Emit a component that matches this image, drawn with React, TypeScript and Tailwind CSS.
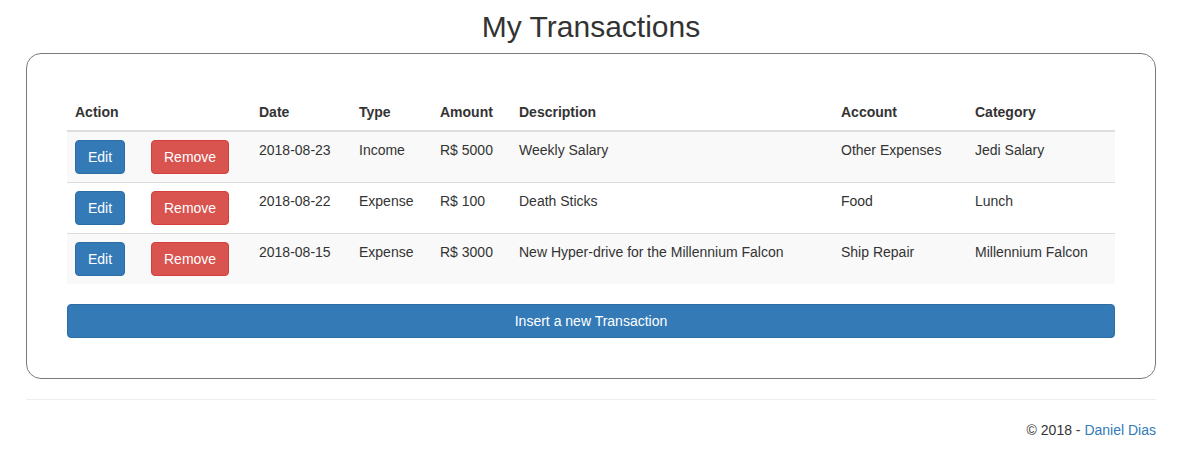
const rows = [
  { date: '2018-08-23', type: 'Income', amount: 'R$ 5000', description: 'Weekly Salary', account: 'Other Expenses', category: 'Jedi Salary' },
  { date: '2018-08-22', type: 'Expense', amount: 'R$ 100', description: 'Death Sticks', account: 'Food', category: 'Lunch' },
  { date: '2018-08-15', type: 'Expense', amount: 'R$ 3000', description: 'New Hyper-drive for the Millennium Falcon', account: 'Ship Repair', category: 'Millennium Falcon' },
]

export default function App() {
  return (
    <div className="min-h-screen bg-white text-[14px] leading-[20px] text-[#333] font-['Liberation_Sans',Arial,sans-serif]">
      <div className="ml-[26px] w-[1130px] pt-[10px]">
        <h2 className="text-center text-[30px] leading-[33px] mb-[10px] text-[#333]">My Transactions</h2>

        <div className="border border-[#7a7a7a] rounded-[15px] px-[40px] pt-[40px] pb-[40px]">
          <table className="w-full table-fixed border-collapse">
            <thead>
              <tr className="text-left">
                <th className="w-[76px] p-2 font-bold border-b-2 border-[#ddd]">Action</th>
                <th className="w-[108px] p-2 border-b-2 border-[#ddd]"></th>
                <th className="w-[100px] p-2 font-bold border-b-2 border-[#ddd]">Date</th>
                <th className="w-[81px] p-2 font-bold border-b-2 border-[#ddd]">Type</th>
                <th className="w-[79px] p-2 font-bold border-b-2 border-[#ddd]">Amount</th>
                <th className="w-[322px] p-2 font-bold border-b-2 border-[#ddd]">Description</th>
                <th className="w-[134px] p-2 font-bold border-b-2 border-[#ddd]">Account</th>
                <th className="p-2 font-bold border-b-2 border-[#ddd]">Category</th>
              </tr>
            </thead>
            <tbody>
              {rows.map((r, i) => (
                <tr key={i} className={i % 2 === 0 ? 'bg-[#f9f9f9]' : 'bg-white'}>
                  <td className={`p-2 align-top ${i > 0 ? 'border-t border-[#ddd]' : ''}`}>
                    <button className="h-[34px] px-3 rounded-[4px] bg-[#337ab7] border border-[#2e6da4] text-white">Edit</button>
                  </td>
                  <td className={`p-2 align-top ${i > 0 ? 'border-t border-[#ddd]' : ''}`}>
                    <button className="h-[34px] px-3 rounded-[4px] bg-[#d9534f] border border-[#d43f3a] text-white">Remove</button>
                  </td>
                  <td className={`p-2 align-top ${i > 0 ? 'border-t border-[#ddd]' : ''}`}>{r.date}</td>
                  <td className={`p-2 align-top ${i > 0 ? 'border-t border-[#ddd]' : ''}`}>{r.type}</td>
                  <td className={`p-2 align-top ${i > 0 ? 'border-t border-[#ddd]' : ''}`}>{r.amount}</td>
                  <td className={`p-2 align-top ${i > 0 ? 'border-t border-[#ddd]' : ''}`}>{r.description}</td>
                  <td className={`p-2 align-top ${i > 0 ? 'border-t border-[#ddd]' : ''}`}>{r.account}</td>
                  <td className={`p-2 align-top ${i > 0 ? 'border-t border-[#ddd]' : ''}`}>{r.category}</td>
                </tr>
              ))}
            </tbody>
          </table>

          <button className="mt-5 w-full h-[34px] rounded-[4px] bg-[#337ab7] border border-[#2e6da4] text-white">
            Insert a new Transaction
          </button>
        </div>

        <hr className="my-5 border-t border-[#eee]" />

        <footer className="text-right">
          © 2018 - <a href="#" className="text-[#337ab7]">Daniel Dias</a>
        </footer>
      </div>
    </div>
  )
}
